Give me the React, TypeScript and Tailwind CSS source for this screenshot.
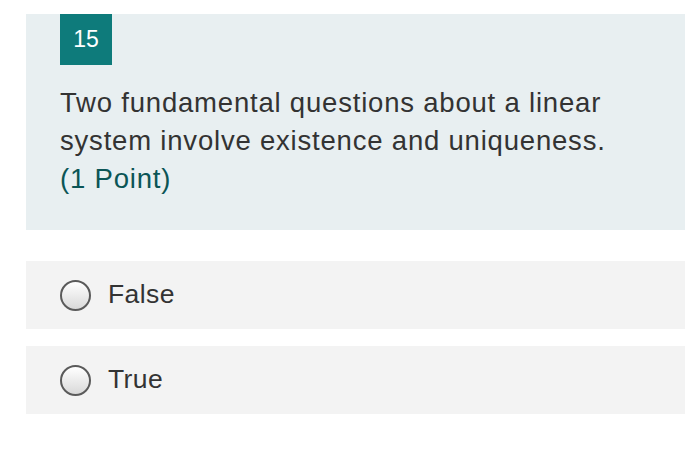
import React from 'react';

const options = ['False', 'True'];

function Radio() {
  return (
    <span className="w-[31px] h-[31px] shrink-0 rounded-full border-2 border-[#5a5a5a] bg-gradient-to-b from-white to-[#d9d9d9]" />
  );
}

export default function App() {
  return (
    <div className="w-[700px] h-[449px] bg-white pt-[14px] font-['Liberation_Sans',Arial,sans-serif]">
      <div className="ml-[26px] w-[659px] bg-[#e8eff1] pl-[34px] pb-[32px]">
        <div className="w-[52px] h-[51px] bg-[#0e7b7b] text-white text-[23px] flex items-center justify-center">
          15
        </div>
        <p className="mt-[19px] text-[27.5px] leading-[38px] tracking-[0.8px] text-[#333333]">
          Two fundamental questions about a linear
          <br />
          system involve existence and uniqueness.
          <br />
          <span className="text-[#0b5556]">(1 Point)</span>
        </p>
      </div>

      <div className="mt-[31px] ml-[26px] w-[659px] flex flex-col gap-[17px]">
        {options.map((opt) => (
          <div key={opt} className="h-[68px] bg-[#f3f3f3] flex items-center pl-[34px] gap-[17px]">
            <Radio />
            <span className="text-[26.5px] tracking-[0.4px] text-[#333333]">{opt}</span>
          </div>
        ))}
      </div>
    </div>
  );
}
